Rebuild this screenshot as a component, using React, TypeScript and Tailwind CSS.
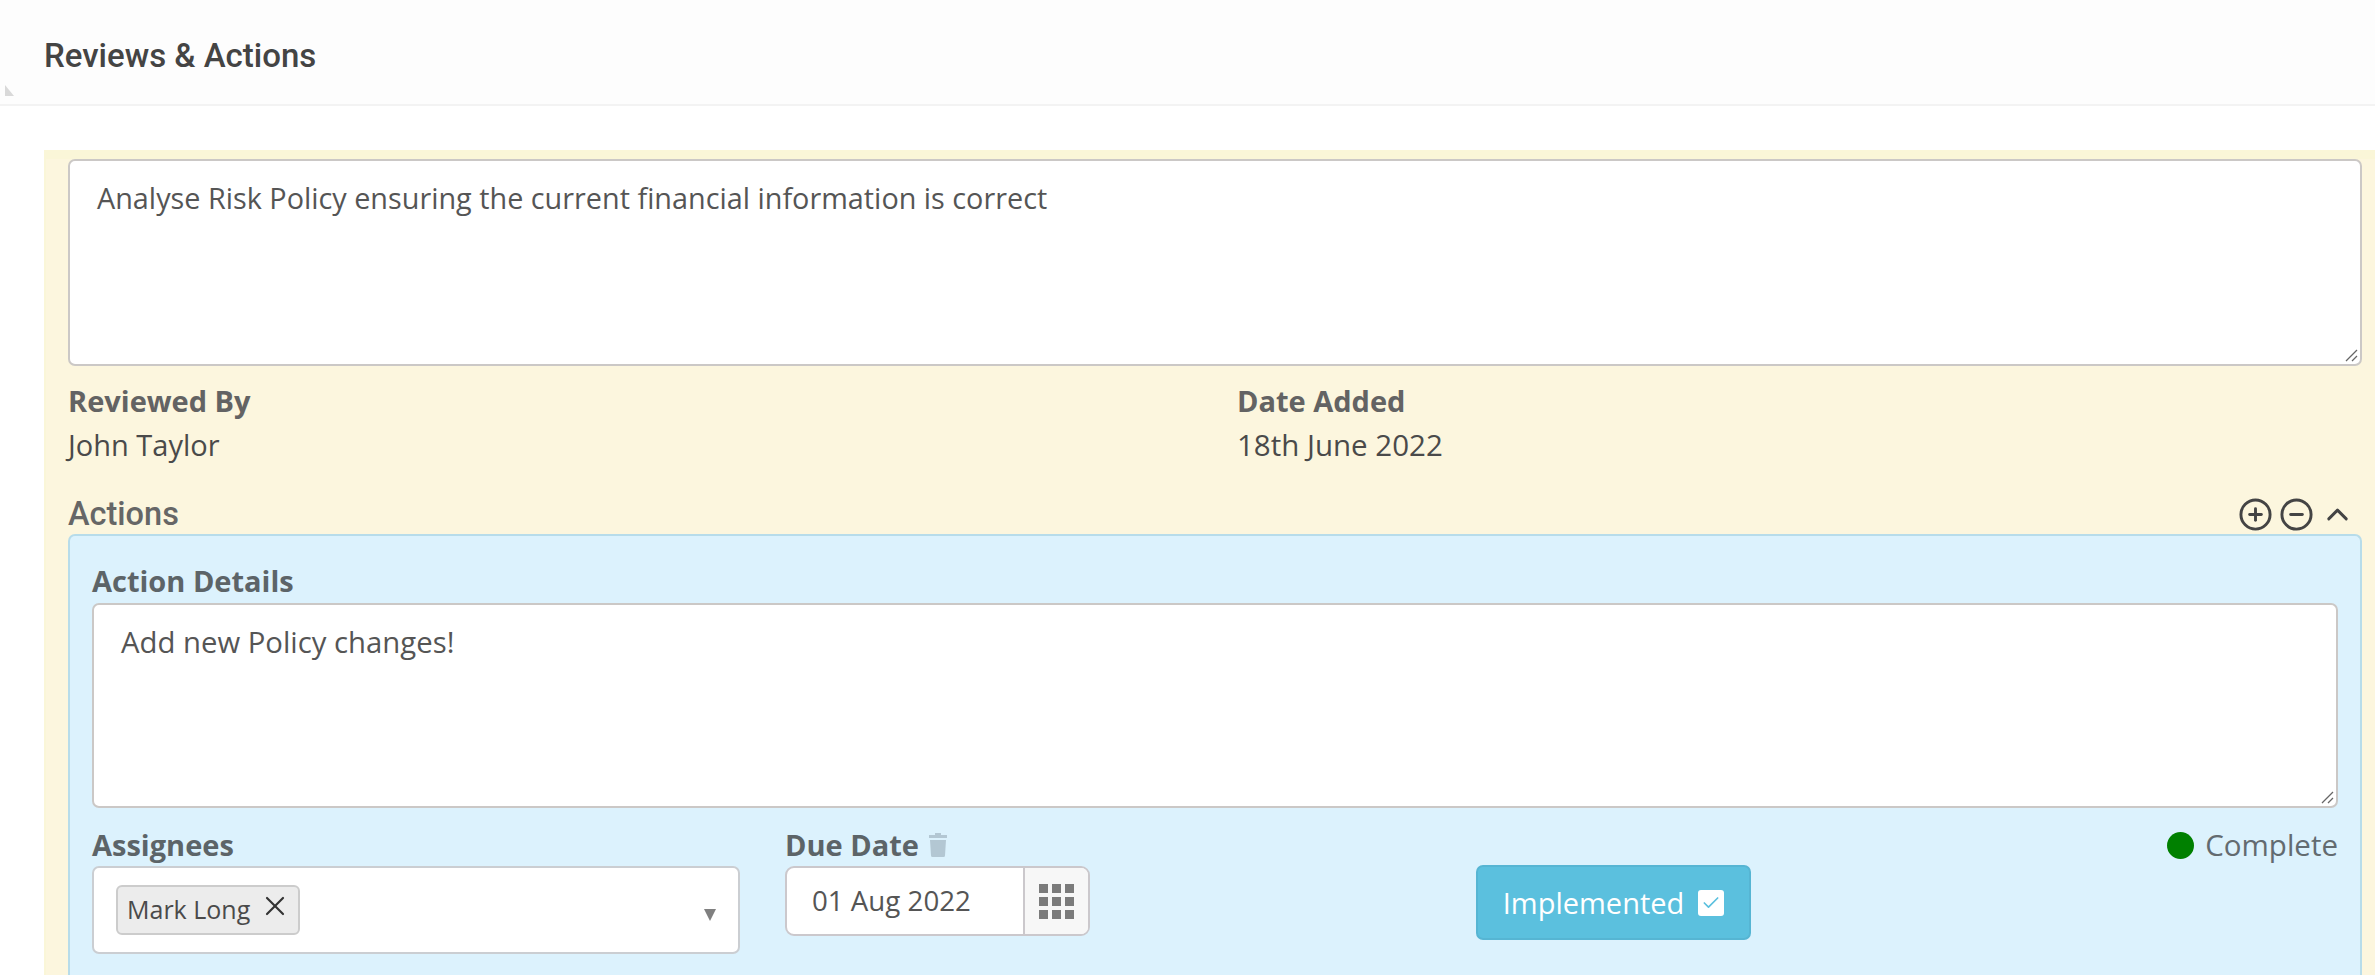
import { Check, ChevronUp, CircleMinus, CirclePlus, X } from "lucide-react";

const BODY_FONT = "font-['Open_Sans',sans-serif]";
const LABEL_CLASS = "text-[29px] leading-[38px] font-bold text-[#636363]";
const BLUE_LABEL_CLASS = "text-[29px] leading-[38px] font-bold text-[#5c6468]";
const TEXTAREA_CLASS =
  "relative rounded-[7px] border-2 border-[#cbc8c6] bg-white leading-[38px] text-[#555555]";

function ResizeGrip() {
  return (
    <svg className="absolute right-0.5 bottom-0.5" width="14" height="14" viewBox="0 0 14 14">
      <path d="M2 13 13 2M8 13l5-5" stroke="#666" strokeWidth="1.3" fill="none" />
    </svg>
  );
}

function GridIcon() {
  const cells = [0, 1, 2, 3, 4, 5, 6, 7, 8];
  return (
    <div className="grid w-[36px] grid-cols-3 gap-[4px]">
      {cells.map((c) => (
        <div key={c} className="h-[9px] w-[9px] bg-[#7b7b7b]" />
      ))}
    </div>
  );
}

function TrashIcon() {
  return (
    <svg width="18" height="24" viewBox="0 0 18 24">
      <path d="M6 0h6v2h6v3H0V2h6zM1 7h16l-1 15.5a1.5 1.5 0 0 1-1.5 1.5h-11A1.5 1.5 0 0 1 2 22.5z" fill="#b3c7d3" />
    </svg>
  );
}

export default function App() {
  return (
    <div className={`h-[975px] w-[2375px] overflow-hidden bg-white ${BODY_FONT}`}>
      <header className="relative flex h-[106px] items-start border-b-2 border-[#f3f3f3] bg-[#fdfdfd] pt-[36px] pl-[44px]">
        <h1 className="font-['Roboto',sans-serif] text-[33px] leading-[40px] font-medium text-[#444444]">
          Reviews &amp; Actions
        </h1>
        <div className="absolute top-[85px] left-[5px] h-0 w-0 border-t-[11px] border-l-[9px] border-t-transparent border-l-[#d9d9d9]" />
      </header>

      <section className="mt-[44px] ml-[44px] h-[825px] border-t-[9px] border-l-2 border-[#faf6d8] bg-[#fcf6de] pr-[13px] pl-[22px]">
        <div className={`${TEXTAREA_CLASS} h-[207px] px-[27px] pt-[18px] text-[28.8px]`}>
          Analyse Risk Policy ensuring the current financial information is correct
          <ResizeGrip />
        </div>

        <div className="mt-[16px] grid grid-cols-[1169px_1fr]">
          <div>
            <div className={LABEL_CLASS}>Reviewed By</div>
            <div className="mt-[6px] text-[29px] leading-[38px] text-[#4a4a4a]">John Taylor</div>
          </div>
          <div>
            <div className={LABEL_CLASS}>Date Added</div>
            <div className="mt-[6px] text-[29.5px] leading-[38px] text-[#4a4a4a]">18th June 2022</div>
          </div>
        </div>

        <div className="mt-[30px] flex h-[40px] items-center justify-between pr-[7px]">
          <span className="font-['Roboto',sans-serif] text-[32.5px] leading-[40px] font-medium text-[#666666]">Actions</span>
          <div className="flex items-center gap-[6px] text-[#444444]">
            <CirclePlus size={35} strokeWidth={2} />
            <CircleMinus size={35} strokeWidth={2} />
            <ChevronUp size={35} strokeWidth={2} />
          </div>
        </div>

        <div className="h-[450px] rounded-t-[7px] border-t-2 border-r-2 border-l-2 border-[#b7dcea] bg-[#dcf2fd] px-[22px] pt-[26px]">
          <div className={BLUE_LABEL_CLASS}>Action Details</div>
          <div className={`${TEXTAREA_CLASS} mt-[3px] h-[205px] px-[27px] pt-[18px] text-[29.3px]`}>
            Add new Policy changes!
            <ResizeGrip />
          </div>

          <div className="mt-[18px] flex items-start">
            <div className="w-[648px]">
              <div className={BLUE_LABEL_CLASS}>Assignees</div>
              <div className="relative mt-[2px] flex h-[88px] items-center rounded-[7px] border-2 border-[#cbced2] bg-white pl-[22px]">
                <div className="flex h-[50px] items-center gap-[9px] rounded-[6px] border-2 border-[#cccccc] bg-[#ececec] pr-[7px] pl-[9px] text-[25px] text-[#4a4a4a]">
                  Mark Long
                  <X size={32} strokeWidth={1.6} className="-mt-[8px] text-[#333333]" />
                </div>
                <div className="absolute top-[41px] right-[22px] h-0 w-0 border-t-[12px] border-r-[6px] border-l-[6px] border-t-[#808080] border-r-transparent border-l-transparent" />
              </div>
            </div>

            <div className="ml-[45px] w-[305px]">
              <div className="flex items-center gap-[10px] text-[29px] leading-[38px] font-bold text-[#5c6468]">
                Due Date
                <TrashIcon />
              </div>
              <div className="mt-[2px] flex h-[70px] overflow-hidden rounded-[9px] border-2 border-[#cbc8cc] bg-white">
                <div className="flex flex-1 items-center pl-[25px] text-[27.7px] text-[#555555]">01 Aug 2022</div>
                <div className="flex w-[65px] items-center justify-center border-l-2 border-[#cbc8cc] bg-[#f7f7f7]">
                  <GridIcon />
                </div>
              </div>
            </div>

            <button className="mt-[39px] ml-[386px] flex h-[75px] w-[275px] items-center justify-center gap-[14px] rounded-[7px] border-2 border-[#56b5d3] bg-[#5bc0de] text-[29px] text-white">
              Implemented
              <span className="flex h-[26px] w-[26px] items-center justify-center rounded-[3px] bg-white">
                <Check size={20} strokeWidth={2} className="text-[#5bc0de]" />
              </span>
            </button>

            <div className="ml-auto flex h-[38px] items-center gap-[11px] text-[29.5px] text-[#636b70]">
              <span className="h-[27px] w-[27px] rounded-full bg-[#008000]" />
              Complete
            </div>
          </div>
        </div>
      </section>
    </div>
  );
}
